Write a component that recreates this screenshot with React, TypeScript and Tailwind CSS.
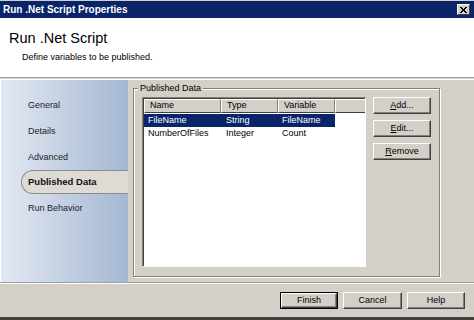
const ui = { fontFamily: '"Liberation Sans", Arial, sans-serif' };

function Btn({ label, hot, isDefault }: { label: string; hot?: number; isDefault?: boolean }) {
    const txt = hot === undefined
        ? <span>{label}</span>
        : <span>{label.slice(0, hot)}<u>{label[hot]}</u>{label.slice(hot + 1)}</span>;
    return <div className={`h-[17px] flex ${isDefault ? "border border-black" : ""}`}>
        <div className="flex-1 flex items-center justify-center bg-[#d4d0c8] border-t border-l border-t-white border-l-white border-b border-r border-b-[#404040] border-r-[#404040] shadow-[inset_-1px_-1px_0_#808080] text-[9px] text-black">
            {txt}
        </div>
    </div>
}

function HeaderCell({ label, w }: { label: string; w: string }) {
    return <div className={`${w} h-[14px] flex items-center pl-[5px] bg-[#d4d0c8] border-t border-l border-t-white border-l-white border-b border-r border-b-[#404040] border-r-[#808080] text-[9px] text-black`}>{label}</div>
}

export default function App() {
    const navItems = ["General", "Details", "Advanced", "Published Data", "Run Behavior"];
    return <div style={ui} className="w-[474px] h-[320px] flex flex-col bg-[#d4d0c8] overflow-hidden">
        <div className="h-[18px] border-t border-t-[#d4d0c8] bg-[#0a246a] flex items-center justify-between pl-[3px] pr-[4px]">
            <p className="text-[10px] font-bold text-white">Run .Net Script Properties</p>
            <div className="w-[13px] h-[11px] bg-[#d4d0c8] border-t border-l border-t-white border-l-white border-b border-r border-b-[#404040] border-r-[#404040] flex items-center justify-center">
                <svg width="7" height="6" viewBox="0 0 7 6"><path d="M0 0 L6 6 M1 0 L7 6 M6 0 L0 6 M7 0 L1 6" stroke="#000" strokeWidth="1" /></svg>
            </div>
        </div>
        <div className="h-[59px] bg-white pl-[9px] pt-[10px]">
            <p className="text-[14.5px] leading-[20px] text-black">Run .Net Script</p>
            <p className="text-[9px] leading-[12px] text-black pl-[13px] pt-[3px]">Define variables to be published.</p>
        </div>
        <div className="h-[3px] border-t border-t-[#a0a0a0] border-b border-b-white bg-[#d4d0c8]" />
        <div className="h-[202px] flex">
            <div className="w-[128px] bg-linear-to-r from-[#e3e9f3] to-[#a5b7d1] pt-[12px] border-l border-l-white">
                {navItems.map(item => item === "Published Data"
                    ? <div key={item} className="h-[25.75px] flex items-center">
                        <div className="ml-[20px] flex-1 h-[24px] rounded-l-[12px] bg-[#dedbd4] border border-r-0 border-[#8c8c8c] flex items-center pl-[6px] text-[9.5px] font-bold text-[#111]">{item}</div>
                    </div>
                    : <div key={item} className="h-[25.75px] flex items-center pt-[2px] pl-[27px] text-[9px] text-[#1c1c2c]">{item}</div>)}
            </div>
            <div className="flex-1 pl-[5px] pr-[34px] pt-[8px] pb-[5px] flex">
                <div className="relative flex-1 border border-[#808080] shadow-[1px_1px_0_white,inset_1px_1px_0_white] flex pl-[8px] pt-[8px] pb-[9px]">
                    <p className="absolute left-[4px] top-[-7px] px-[2px] bg-[#d4d0c8] text-[9px] text-black">Published Data</p>
                    <div className="w-[224px] bg-white border-t border-l border-t-[#808080] border-l-[#808080] border-b border-r border-b-white border-r-white shadow-[inset_1px_1px_0_#404040]">
                        <div className="flex pl-[1px] pt-[1px]">
                            <HeaderCell label="Name" w="w-[77px]" />
                            <HeaderCell label="Type" w="w-[57px]" />
                            <HeaderCell label="Variable" w="w-[57px]" />
                            <div className="flex-1 h-[14px] bg-[#d4d0c8] border-t border-l border-t-white border-l-white border-b border-b-[#404040]" />
                        </div>
                        <div className="pl-[1px] pt-[1px]">
                            <div className="flex w-[191px] h-[13px] items-center bg-[#0a246a] text-white text-[9px]">
                                <span className="w-[77px] pl-[4px]">FileName</span>
                                <span className="w-[57px] pl-[5px]">String</span>
                                <span className="w-[57px] pl-[4px]">FileName</span>
                            </div>
                            <div className="flex w-[191px] h-[13px] items-center text-black text-[9px]">
                                <span className="w-[77px] pl-[4px]">NumberOfFiles</span>
                                <span className="w-[57px] pl-[5px]">Integer</span>
                                <span className="w-[57px] pl-[4px]">Count</span>
                            </div>
                        </div>
                    </div>
                    <div className="w-[58px] ml-[7px] flex flex-col gap-[6px]">
                        <Btn label="Add..." hot={0} />
                        <Btn label="Edit..." hot={0} />
                        <Btn label="Remove" hot={0} />
                    </div>
                </div>
            </div>
        </div>
        <div className="flex-1 border-t border-t-[#a0a0a0] shadow-[inset_0_1px_0_white] flex justify-end items-start pt-[9px] pr-[9px] gap-[5px]">
            <div className="w-[58px]"><Btn label="Finish" isDefault /></div>
            <div className="w-[59px]"><Btn label="Cancel" /></div>
            <div className="w-[58px]"><Btn label="Help" /></div>
        </div>
        <div className="h-[3px] bg-[#404040]" />
    </div>
}
